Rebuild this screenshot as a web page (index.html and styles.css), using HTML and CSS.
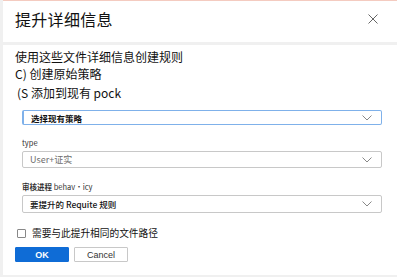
FILE: index.html
```html
<!DOCTYPE html>
<html lang="zh-CN">
<head>
    <meta charset="UTF-8">
    <title>提升详细信息</title>
    <link rel="stylesheet" href="styles.css">
</head>
<body>
    <div class="dialog">
        <div class="header">
            <h2>提升详细信息</h2>
            <span class="close">
                <svg width="10" height="10" viewBox="0 0 10 10"><path d="M0.5 0.5 L9.5 9.5 M9.5 0.5 L0.5 9.5" stroke="#666" stroke-width="1" fill="none"/></svg>
            </span>
        </div>
        <div class="content">
            <p class="line">使用这些文件详细信息创建规则</p>
            <p class="line">C) 创建原始策略</p>
            <p class="line indent">(S 添加到现有 pock</p>

            <div class="select active">
                <span>选择现有策略</span>
                <svg class="chev" width="10" height="6" viewBox="0 0 10 6"><path d="M0.5 0.5 L5 5 L9.5 0.5" stroke="#888" fill="none"/></svg>
            </div>

            <label class="field-label">type</label>
            <div class="select mid">
                <span class="muted">User+证实</span>
                <svg class="chev" width="10" height="6" viewBox="0 0 10 6"><path d="M0.5 0.5 L5 5 L9.5 0.5" stroke="#888" fill="none"/></svg>
            </div>

            <label class="field-label bold">审核进程 <span class="thin">behav•icy</span></label>
            <div class="select tall">
                <span>要提升的 Requite 规则</span>
                <svg class="chev" width="10" height="6" viewBox="0 0 10 6"><path d="M0.5 0.5 L5 5 L9.5 0.5" stroke="#888" fill="none"/></svg>
            </div>

            <div class="check">
                <span class="box"></span>
                <span>需要与此提升相同的文件路径</span>
            </div>

            <div class="buttons">
                <button class="btn primary">OK</button>
                <button class="btn">Cancel</button>
            </div>
        </div>
    </div>
</body>
</html>
```

FILE: styles.css
```css
html, body {
    margin: 0;
    padding: 0;
}
body {
    font-family: 'Noto Sans CJK SC', 'Liberation Sans', sans-serif;
    background: #f0f0f0;
    color: #111;
    width: 397px;
    height: 277px;
    overflow: hidden;
}
.dialog {
    border-top: 1px solid #f4cbc0;
    margin-left: 3px;
    height: 274px;
    display: flex;
    flex-direction: column;
}
.header {
    background: #fff;
    height: 41px;
    display: flex;
    align-items: center;
    justify-content: space-between;
    padding: 0 19px 0 12px;
    margin-bottom: 3px;
}
h2 {
    margin: 0;
    font-weight: 400;
    font-size: 16px;
    letter-spacing: 0.3px;
    margin-top: -6px;
}
.close {
    display: flex;
    margin-top: -6px;
}
.content {
    background: #fff;
    flex: 1;
    padding: 3px 12px 0 12px;
}
.line {
    margin: 0;
    font-size: 12px;
    line-height: 17px;
}
.indent {
    margin-left: 2px;
    margin-top: 2px;
}
.select {
    margin: 9px 3px 0 7px;
    height: 13px;
    border: 1px solid #c8c8c8;
    border-radius: 2px;
    display: flex;
    align-items: center;
    justify-content: space-between;
    padding: 0 9px 0 7px;
    font-size: 8.5px;
    font-weight: 700;
}
.select.active {
    border-color: #7fb1ea;
    border-left-width: 2px;
}
.select.mid {
    height: 15px;
    margin-top: 4px;
}
.select.tall {
    height: 16px;
    font-weight: 500;
}
.muted {
    color: #6e6e6e;
    font-weight: 400;
    font-size: 9px;
}
.field-label {
    display: block;
    margin: 13px 0 0 7px;
    font-size: 7.5px;
    line-height: 10px;
    color: #333;
}
.field-label + .select {
    margin-top: 3px;
}
.field-label.bold {
    font-weight: 700;
    margin-top: 14px;
}
.thin {
    font-weight: 400;
    color: #333;
}
.check {
    display: flex;
    align-items: center;
    gap: 6px;
    margin: 13px 0 0 2px;
    font-size: 9.7px;
}
.box {
    width: 7px;
    height: 7px;
    border: 1px solid #888;
    border-radius: 1px;
}
.buttons {
    display: flex;
    gap: 5px;
    margin-top: 7px;
}
.btn {
    width: 54px;
    height: 15px;
    border: 1px solid #c8c8c8;
    background: #fff;
    font-family: 'Liberation Sans', sans-serif;
    font-size: 9px;
    color: #333;
    padding: 0;
    border-radius: 1px;
}
.btn.primary {
    background: #0f6cd6;
    border-color: #0f6cd6;
    color: #fff;
    font-weight: 700;
}
```
